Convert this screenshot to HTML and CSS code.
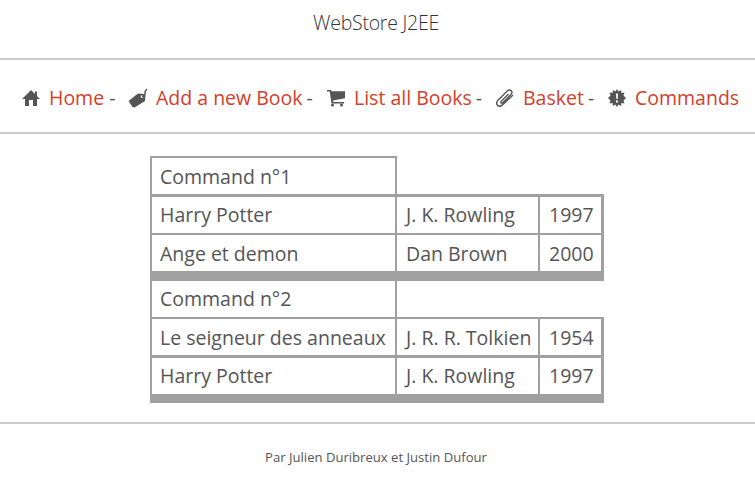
FILE: index.html
```html
<!DOCTYPE html>
<html lang="fr">
<head>
<meta charset="utf-8">
<title>WebStore J2EE</title>
<link rel="stylesheet" href="styles.css">
</head>
<body>
<header class="title">WebStore J2EE</header>
<nav class="nav">
<div class="item home"><svg class="icon" viewBox="0 0 20 20"><path d="M10 2 1 11h3v7h4v-6h4v6h4v-7h3l-3-3V3.500h-2v2.500z"/></svg><a href="#">Home</a><span>-</span></div>
<div class="item tag"><svg class="icon" viewBox="0 0 20 20"><path fill-rule="evenodd" d="M.5 13 10 5.500 16 6l1.500 1.500-.5 5.500L6.500 19.500 4.500 19zM14 7.300a1.300 1.300 0 1 0 .1 0z"/><path class="line" d="M14 8.500q3 0 3-3t2-4.500"/></svg><a href="#">Add a new Book</a><span>-</span></div>
<div class="item cart"><svg class="icon" viewBox="0 0 20 20"><path d="M1 2h4l.5 1.200H19v7L7 12.500l.3 1.500H18v1.500H5.500L3.700 3.500H1z"/><circle cx="6.500" cy="17" r="1.500"/><circle cx="15.500" cy="17" r="1.500"/></svg><a href="#">List all Books</a><span>-</span></div>
<div class="item clip"><svg class="icon" viewBox="0 0 20 20"><path class="line" d="m13.500 6-7.300 7.300q-1 2 1.300 1.700l8-8q2.500-2.500.8-4.200t-4.300.5L3 12.200q-2.500 2.800-.5 5t5-.3L18 7"/></svg><a href="#">Basket</a><span>-</span></div>
<div class="item gear"><svg class="icon" viewBox="0 0 20 20"><path d="m10 1 1.500 2.500L14 2l.5 3 3-.5-1 3 2.500 2.500-2.500 2.500 1 3-3-.5L14 18l-2.500-1.500L10 19l-1.500-2.500L6 18l-.5-3-3 .5 1-3L1 10l2.500-2.500-1-3 3 .5L6 2l2.500 1.500z"/><path class="mark" d="M9 5.500h2l-.3 5.500H9.300zM9 12.500h2v2H9z"/></svg><a href="#">Commands</a></div>
</nav>
<main>
<table>
<colgroup><col class="c1"><col class="c2"><col class="c3"></colgroup>
<tr class="first"><td class="name">Command n°1</td><td class="blank" colspan="2"></td></tr>
<tr><td>Harry Potter</td><td>J. K. Rowling</td><td>1997</td></tr>
<tr class="last"><td>Ange et demon</td><td>Dan Brown</td><td>2000</td></tr>
<tr><td>Command n°2</td><td class="blank" colspan="2"></td></tr>
<tr class="double"><td>Le seigneur des anneaux</td><td>J. R. R. Tolkien</td><td>1954</td></tr>
<tr class="end"><td>Harry Potter</td><td>J. K. Rowling</td><td>1997</td></tr>
</table>
</main>
<footer>Par Julien Duribreux et Justin Dufour</footer>
</body>
</html>
```
FILE: styles.css
```css
body{margin:0;font:19.5px/26px "Open Sans",sans-serif;color:#555;background:#fff}
.title{height:58px;line-height:45px;text-align:center;font-weight:300;font-size:19.5px;letter-spacing:-.25px;color:#333;border-bottom:2px solid #ccc;padding-right:3px}
.nav{height:72px;border-bottom:2px solid #ccc;display:flex;align-items:center;padding-left:21px;white-space:nowrap}
.item{display:flex;align-items:center;flex:none;padding-top:4px}
.item a{color:#d4402a;text-decoration:none}
.item span{margin-left:5px}
.home{width:107px}
.tag{width:198px}
.cart{width:169px}
.clip{width:112px}
.icon{width:20px;height:20px;margin-right:8px;fill:#555}
.tag span,.cart span,.clip span{margin-left:4px}
.line{fill:none;stroke:#555;stroke-width:1.4}
.mark{fill:#fff}
main{height:290px;border-bottom:2px solid #ccc;padding-top:22px;box-sizing:border-box}
table{border-collapse:separate;border-spacing:0;table-layout:fixed;width:454px;margin:0 0 0 150px}
.c1{width:247px}
.c2{width:143px}
.c3{width:64px}
td{box-sizing:border-box;height:38px;border:0 solid #a0a0a0;border-width:0 2px 2px 0;padding:0 0 0 9px;white-space:nowrap}
td:first-child{border-left-width:2px;padding-left:8px}
td:nth-child(3){border-right-width:3px}
td.blank{border-right-width:0}
tr.first td{height:41px;border-bottom-width:3px;padding-top:2px}
tr.first td.name{border-top-width:2px}
tr.last td{height:46px;border-bottom-width:10px;padding-top:2px}
tr.double td{height:39px;border-bottom-width:3px;padding-top:2px}
tr.end td{height:45px;border-bottom-width:9px}
footer{text-align:center;font-size:13.1px;line-height:66px;padding-right:3px}
```
